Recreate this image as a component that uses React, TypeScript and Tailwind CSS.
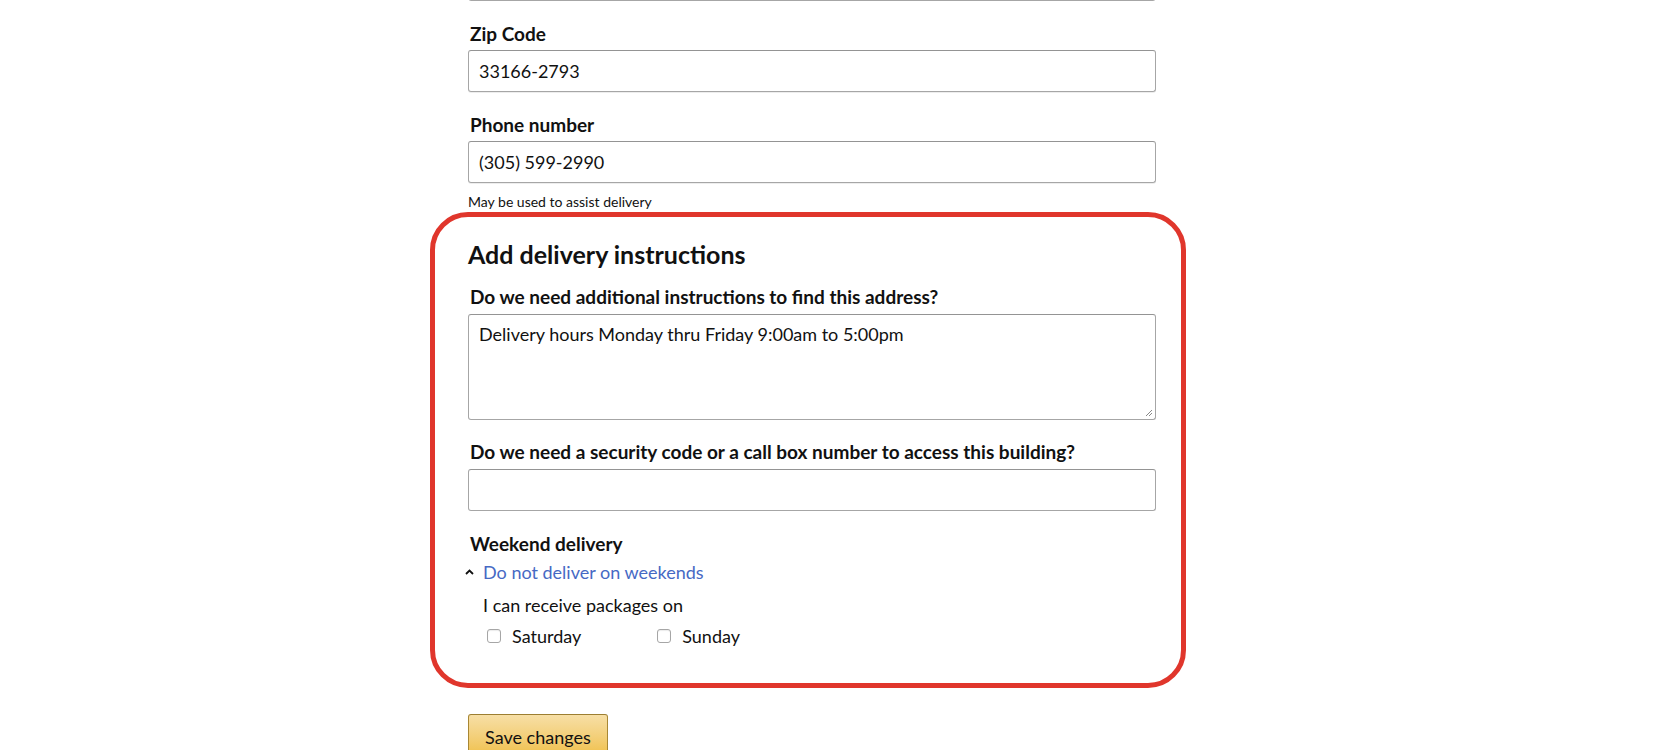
const font = { fontFamily: '"Lato", "Liberation Sans", sans-serif' };

function Field({ label, value }: { label: string; value: string }) {
  return (
    <div className="mt-[22px]">
      <label className="block pl-[2px] text-[19px] leading-[22px] font-bold text-[#111]">{label}</label>
      <div className="mt-[5px] h-[42px] rounded-[3px] border border-[#a6a6a6] border-t-[#949494] shadow-[0_1px_0_rgba(0,0,0,0.07)] flex items-center px-[10px] text-[18px] text-[#111]">
        {value}
      </div>
    </div>
  );
}

function Checkbox({ label }: { label: string }) {
  return (
    <label className="flex items-center gap-[11px] text-[18px] leading-[24px] text-[#111]">
      <span className="w-[14px] h-[14px] rounded-[3px] border border-[#a6a6a6] bg-white shadow-[inset_0_1px_1px_rgba(0,0,0,0.08)]" />
      {label}
    </label>
  );
}

export default function App() {
  return (
    <div className="w-[1675px] h-[750px] overflow-hidden bg-white" style={font}>
      <div className="ml-[468px] w-[688px]">
        {/* cut-off field above */}
        <div className="-mt-[41px] h-[42px] rounded-[3px] border border-[#a6a6a6]" />

        <Field label="Zip Code" value="33166-2793" />
        <Field label="Phone number" value="(305) 599-2990" />
        <p className="mt-[10px] text-[14px] leading-[18px] text-[#111]">May be used to assist delivery</p>

        <section className="mt-[1px] -ml-[38px] -mr-[30px] rounded-[38px] border-[5px] border-[#e0362c] pl-[33px] pr-[25px] pt-[22px] pb-[35px]">
          <h2 className="text-[25px] leading-[30px] font-bold text-[#111]">Add delivery instructions</h2>

          <label className="mt-[16px] block pl-[2px] text-[19px] leading-[24px] font-bold text-[#111]">
            Do we need additional instructions to find this address?
          </label>
          <div className="relative mt-[5px] h-[106px] rounded-[3px] border border-[#a6a6a6] border-t-[#949494] px-[10px] pt-[7px] text-[18px] leading-[24px] text-[#111]">
            Delivery hours Monday thru Friday 9:00am to 5:00pm
            <svg className="absolute right-[2px] bottom-[2px]" width="9" height="9" viewBox="0 0 9 9">
              <path d="M8 2 L2 8 M8 5 L5 8" stroke="#888" strokeWidth="1" />
            </svg>
          </div>

          <label className="mt-[20px] block pl-[2px] text-[19px] leading-[24px] font-bold text-[#111]">
            Do we need a security code or a call box number to access this building?
          </label>
          <div className="mt-[5px] h-[42px] rounded-[3px] border border-[#a6a6a6] border-t-[#949494]" />

          <h3 className="mt-[21px] pl-[2px] text-[19px] leading-[24px] font-bold text-[#111]">Weekend delivery</h3>
          <div className="mt-[4px] flex items-center gap-[9px] text-[18px] leading-[24px]">
            <svg width="9" height="6" viewBox="0 0 9 6" className="ml-[-3px]">
              <path d="M1 5 L4.5 1.5 L8 5" fill="none" stroke="#111" strokeWidth="1.8" />
            </svg>
            <span className="text-[#4669c4]">Do not deliver on weekends</span>
          </div>
          <div className="pl-[15px]">
            <p className="mt-[9px] text-[18px] leading-[24px] text-[#111]">I can receive packages on</p>
            <div className="mt-[7px] flex items-center gap-[76px] pl-[4px]">
              <Checkbox label="Saturday" />
              <Checkbox label="Sunday" />
            </div>
          </div>
        </section>

        <button className="mt-[26px] h-[42px] w-[140px] pl-[16px] rounded-[3px] border border-[#a88734] border-t-[#9c7e31] bg-gradient-to-b from-[#f7dfa5] to-[#f0c14b] text-[18px] leading-[24px] text-[#111] flex items-start pt-[10px]">
          Save changes
        </button>
      </div>
    </div>
  );
}
